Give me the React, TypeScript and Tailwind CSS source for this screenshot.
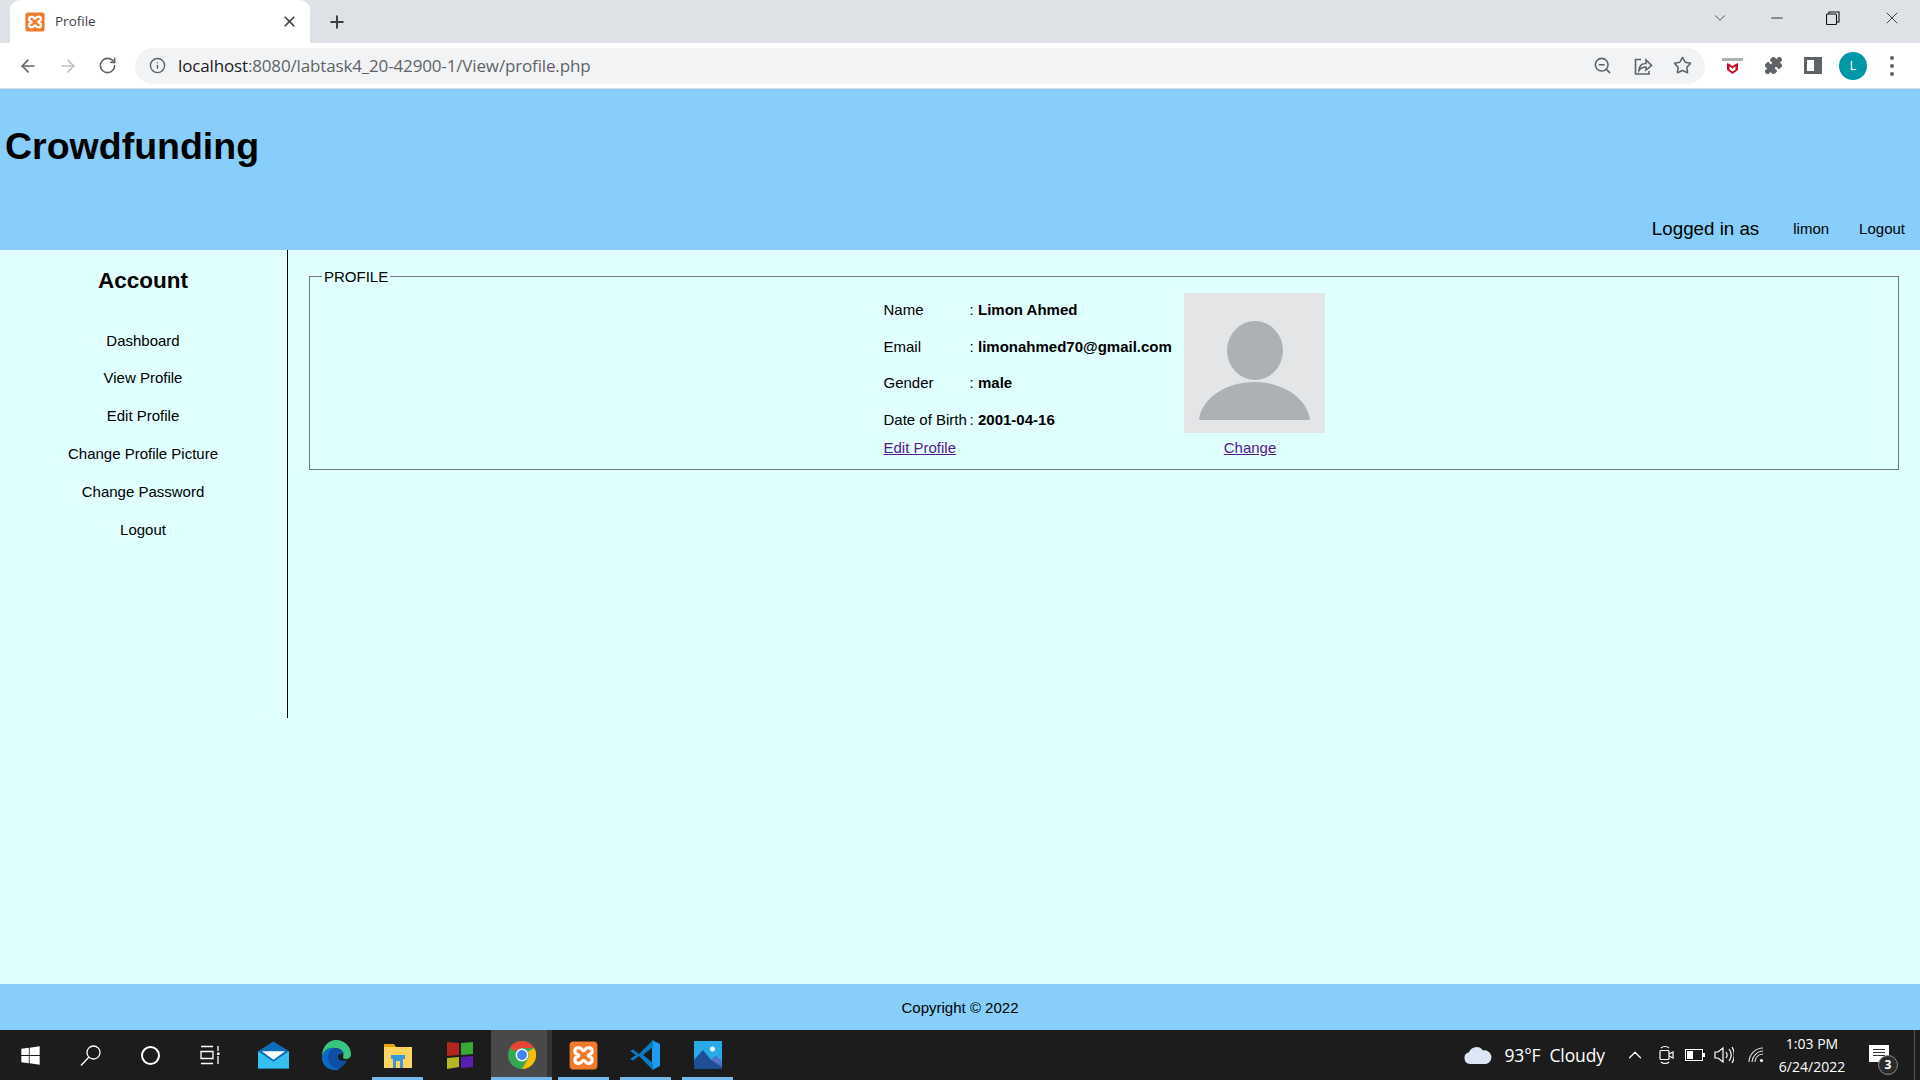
import type { ReactNode } from "react";
import { ArrowLeft, ArrowRight, RotateCw, Info, ZoomOut, Star, ChevronUp, X, Plus, Minus, ChevronDown, Puzzle } from "lucide-react";
import { FaWindows } from "react-icons/fa";

const sideLinks = ["Dashboard", "View Profile", "Edit Profile", "Change Profile Picture", "Change Password", "Logout"];
const rows = [
  ["Name", "Limon Ahmed"],
  ["Email", "limonahmed70@gmail.com"],
  ["Gender", "male"],
  ["Date of Birth", "2001-04-16"],
];

function Xampp({ size }: { size: number }) {
  return (
    <svg width={size} height={size} viewBox="0 0 24 24">
      <rect x="0.5" y="0.5" width="23" height="23" rx="3" fill="#ef7a2b" />
      <path d="M8 5.5c3 0 2.500 2.500 4 2.500s1-2.500 4-2.500c4 0 4 5 1 5.500-1.500.3-1.500 1.800 0 2 3 .5 3 5.500-1 5.500-3 0-2.500-2.500-4-2.500s-1 2.500-4 2.500c-4 0-4-5-1-5.500 1.500-.2 1.500-1.700 0-2-3-.5-3-5.500 1-5.500z" fill="none" stroke="#fff" strokeWidth="2.600" />
    </svg>
  );
}

function Share() {
  return (
    <svg width="20" height="20" viewBox="0 0 20 20" fill="none" stroke="#5f6368" strokeWidth="1.6">
      <path d="M8 3.5H2.500V18H16v-3" />
      <path d="M6 14c.5-4.500 3.500-6.500 7-6.500V4l5.500 5.500-5.500 4.500v-3c-3 0-5.500 1-7 3.500z" />
    </svg>
  );
}

function Shield() {
  return (
    <div className="flex w-[21px] flex-col items-center gap-[2px]">
      <div className="h-[3px] w-[21px] bg-[#b0b0b0]" />
      <svg width="11" height="11" viewBox="0 0 11 11">
        <path d="M0 0l2.500 1L5.500 3 8.500 1 11 0v7L5.500 11 0 7z" fill="#c8102e" />
        <path d="M2.500 3.500l3 2 3-2v3l-3 2-3-2z" fill="#fff" />
      </svg>
    </div>
  );
}

function Mail() {
  return (
    <svg width="31" height="28" viewBox="0 0 32 28">
      <path d="M0 10L16 0l16 10v18H0z" fill="#0f6cbd" />
      <path d="M4 10h24L16 19z" fill="#fff" />
      <path d="M0 10l16 11 16-11v18H0z" fill="#35c0f0" />
    </svg>
  );
}

function Edge() {
  return (
    <svg width="30" height="30" viewBox="0 0 30 30">
      <path d="M15 0C24 0 30 7 30 14c0 5-5 6-8 4 2-6-3-10-8-10C8 8 3 11 1 16 1 7 7 0 15 0z" fill="#3bc47d" />
      <path d="M1 16C3 9 9 7 14 8c-5 2-7 6-6 11 1 5 6 8 11 10-2 1-3 1-5 1C6 30 0 24 1 16z" fill="#0c69c4" />
      <path d="M14 8c4 0 8 2 9 6-3-1-6 0-6 3s4 5 9 3c-2 5-6 8-9 9-6-2-10-6-10-11s3-9 7-10z" fill="#0f4fa3" />
    </svg>
  );
}

function Folder() {
  return (
    <svg width="28" height="26" viewBox="0 0 28 26">
      <path d="M0 2h10l2 3h16v21H0z" fill="#e5a50a" />
      <rect x="0" y="5" width="28" height="21" fill="#ffd45e" />
      <path d="M9 26V15h10v11h-3v-7h-4v7z" fill="#3a96dd" />
      <rect x="7" y="13" width="14" height="4" fill="#3a96dd" />
    </svg>
  );
}

function Store() {
  return (
    <svg width="28" height="30" viewBox="0 0 28 30">
      <path d="M1 2l12 1v12L1 16z" fill="#b3261e" />
      <path d="M15 3l12-1v12l-12 1z" fill="#3aa835" />
      <path d="M1 18l12-1v10L1 29z" fill="#b5b52a" />
      <path d="M15 17l12-1v11l-12 1z" fill="#5b1fb0" />
    </svg>
  );
}

function Chrome() {
  return (
    <svg width="28" height="28" viewBox="0 0 48 48">
      <circle cx="24" cy="24" r="24" fill="#34a853" />
      <path d="M24 0a24 24 0 0 1 20.800 12H24a12 12 0 0 0-10.400 6L3.200 12A24 24 0 0 1 24 0z" fill="#ea4335" />
      <path d="M44.800 12A24 24 0 0 1 24 48l10.400-18A12 12 0 0 0 34.400 18z" fill="#fbbc04" />
      <circle cx="24" cy="24" r="11" fill="#fff" />
      <circle cx="24" cy="24" r="8.500" fill="#4285f4" />
    </svg>
  );
}

function VsCode() {
  return (
    <svg width="31" height="30" viewBox="0 0 31 30">
      <path d="M22 0l8 4v22l-8 4z" fill="#1f9cf0" />
      <path d="M23 0L9 14 3 9.500 0 11l6 4-6 4 3 1.500L9 16l14 14 0-7L13 15 23 7z" fill="#0a7cc4" />
    </svg>
  );
}

function Photos() {
  return (
    <svg width="28" height="28" viewBox="0 0 28 28">
      <rect width="28" height="28" fill="#29a9e6" />
      <circle cx="18.500" cy="8" r="2.500" fill="#e8f6ff" />
      <path d="M0 28V19L9 9l8 10 5-4 6 6v7z" fill="#1e4f96" />
      <path d="M17 19l5-4 6 6v5z" fill="#5470c8" />
    </svg>
  );
}

function Cloud() {
  return (
    <svg width="28" height="18" viewBox="0 0 28 18">
      <path d="M6 18a6 6 0 0 1-1-11.800A8 8 0 0 1 19 4.500 6.500 6.500 0 0 1 22 18z" fill="#dbe7f4" />
    </svg>
  );
}

function Avatar() {
  return (
    <div className="mt-[1px] h-[140px] w-[141px] bg-[#e3e5e7]">
      <svg width="141" height="140" viewBox="0 0 141 140">
        <ellipse cx="71" cy="57.500" rx="28" ry="29.500" fill="#adb1b4" />
        <path d="M15 127c2-21 26-38 55.500-38s53 17 55.500 38z" fill="#adb1b4" />
      </svg>
    </div>
  );
}

function TaskCell({ children, on, active }: { children: ReactNode; on?: boolean; active?: boolean }) {
  if (active) {
    return (
      <div className="relative -mx-[5px] flex h-[50px] w-[61px] items-center justify-center bg-[#494949]">
        <div className="absolute inset-y-0 right-0 w-[5px] bg-[#333]" />
        {children}
        <div className="absolute inset-x-0 bottom-0 h-[3px] bg-[#76b9ed]" />
      </div>
    );
  }
  return (
    <div className="relative flex h-[50px] w-[51px] items-center justify-center">
      {children}
      {on && <div className="absolute inset-x-0 bottom-0 h-[3px] bg-[#76b9ed]" />}
    </div>
  );
}

export default function App() {
  return (
    <div className="flex h-[1080px] w-[1920px] flex-col overflow-hidden bg-[#e0ffff] font-['Liberation_Sans',Arial,sans-serif] text-[15px] text-black">
      {/* tab strip */}
      <div className="flex h-[43px] items-end bg-[#dee1e6] pl-[10px]">
        <div className="flex h-[43px] w-[300px] items-center rounded-t-[10px] bg-white pl-[15px] pr-[12px]">
          <Xampp size={20} />
          <span className="ml-[10px] font-['Open_Sans',sans-serif] text-[13.500px] text-[#3c4043]">Profile</span>
          <X className="ml-auto text-[#3c4043]" size={17} strokeWidth={2.4} />
        </div>
        <div className="ml-[17px] flex h-[43px] items-center">
          <Plus className="text-[#3c4043]" size={20} strokeWidth={2.4} />
        </div>
        <div className="ml-auto flex h-[36px] items-center self-start pr-[18px] text-[#222]">
          <ChevronDown size={18} strokeWidth={1} className="mr-[39px]" />
          <Minus size={18} strokeWidth={1.2} className="mr-[40px]" />
          <svg width="14" height="14" viewBox="0 0 14 14" fill="none" stroke="#111" strokeWidth="1.100" className="mr-[42px]">
            <rect x="0.500" y="3" width="10" height="10.500" rx="1" />
            <path d="M3 3V1h10v10h-2.500" />
          </svg>
          <X size={20} strokeWidth={1} />
        </div>
      </div>

      {/* toolbar */}
      <div className="flex h-[46px] items-center border-b border-[#dadce0] bg-white">
        <ArrowLeft className="ml-[18px] text-[#5f6368]" size={20} strokeWidth={2} />
        <ArrowRight className="ml-[20px] text-[#bdc1c6]" size={20} strokeWidth={2} />
        <RotateCw className="ml-[20px] text-[#5f6368]" size={19} strokeWidth={2} />
        <div className="ml-[18px] flex h-[36px] w-[1570px] items-center rounded-full bg-[#f1f3f4] pl-[14px] pr-[13px]">
          <Info className="text-[#5f6368]" size={17} strokeWidth={2} />
          <span className="ml-[12px] font-['Open_Sans',sans-serif] text-[17px] tracking-[-0.15px] text-[#5f6368]">
            <span className="text-[#202124]">localhost</span>:8080/labtask4_20-42900-1/View/profile.php
          </span>
          <ZoomOut className="ml-auto text-[#5f6368]" size={19} strokeWidth={2} />
          <div className="ml-[21px]"><Share /></div>
          <Star className="ml-[20px] text-[#5f6368]" size={19} strokeWidth={2} />
        </div>
        <div className="ml-[17px]"><Shield /></div>
        <Puzzle className="ml-[21px] fill-[#5f6368] text-[#5f6368]" size={19} strokeWidth={1.5} />
        <div className="ml-[21px] h-[17px] w-[18px] border-[3px] border-[#5f6368] bg-[linear-gradient(to_right,#fff_60%,#5f6368_60%)]" />
        <div className="ml-[17px] flex h-[28px] w-[28px] items-center justify-center rounded-full bg-[#0097a7] font-['Open_Sans',sans-serif] text-[13px] text-white">L</div>
        <div className="ml-[23px] flex flex-col gap-[4px]">
          <span className="h-[4px] w-[4px] rounded-full bg-[#5f6368]" />
          <span className="h-[4px] w-[4px] rounded-full bg-[#5f6368]" />
          <span className="h-[4px] w-[4px] rounded-full bg-[#5f6368]" />
        </div>
      </div>

      {/* page */}
      <div className="relative flex min-h-0 flex-1 flex-col">
        <header className="flex h-[161px] flex-col bg-[#87cefa]">
          <h1 className="pl-[5px] pt-[37px] text-[37.500px] font-bold leading-[41px]">Crowdfunding</h1>
          <div className="mt-auto flex items-center justify-end pb-[10px] pr-[15px]">
            <span className="text-[18.750px] leading-[22px]">Logged in as</span>
            <span className="ml-[34px]">limon</span>
            <span className="ml-[30px]">Logout</span>
          </div>
        </header>

        <main className="flex flex-1 items-start">
          <aside className="h-[468px] w-[288px] border-r border-black pr-[1px]">
            <h2 className="pt-[18px] text-center text-[22.500px] font-bold leading-[26px]">Account</h2>
            <ul className="mt-[28px] text-center">
              {sideLinks.map((l) => (
                <li key={l} className="flex h-[37.800px] items-center justify-center">{l}</li>
              ))}
            </ul>
          </aside>
          <div className="flex-1 pl-[21px] pr-[21px] pt-[18px]">
            <fieldset className="border border-[#767676] px-[12px] pb-[9px]">
              <legend className="px-[2px] leading-[17px]">PROFILE</legend>
              <div className="mx-auto flex w-[445px] pl-[2px] pt-[7px]">
                <div className="w-[300px]">
                  {rows.map(([k, v]) => (
                    <div key={k} className="flex h-[36.600px] items-center">
                      <span className="w-[86px] whitespace-nowrap">{k}</span>
                      <span className="w-[8.500px]">:</span>
                      <span className="whitespace-nowrap font-bold">{v}</span>
                    </div>
                  ))}
                  <a className="-mt-[1.500px] block text-[#551a8b] underline">Edit Profile</a>
                </div>
                <div className="flex flex-col">
                  <Avatar />
                  <a className="mt-[4px] pr-[8px] text-center text-[#551a8b] underline">Change</a>
                </div>
              </div>
            </fieldset>
          </div>
        </main>

        <footer className="flex h-[46px] items-center justify-center bg-[#87cefa] pt-[2px]">Copyright © 2022</footer>
      </div>

      {/* taskbar */}
      <div className="flex h-[50px] items-center bg-[#1c1c1c] text-white">
        <div className="flex w-[60px] justify-center"><FaWindows size={21} /></div>
        <div className="flex w-[60px] justify-center">
          <svg width="21" height="21" viewBox="0 0 21 21" fill="none" stroke="#fff" strokeWidth="1.300">
            <circle cx="13.500" cy="7.500" r="6.500" />
            <path d="M8.800 12.200L1 20.500" />
          </svg>
        </div>
        <div className="flex w-[60px] justify-center">
          <div className="h-[19px] w-[19px] rounded-full border-[2.500px] border-white" />
        </div>
        <div className="flex w-[60px] justify-center">
          <svg width="20" height="20" viewBox="0 0 20 20" fill="none" stroke="#fff" strokeWidth="1.300">
            <path d="M1 1.500h12M1 6.500h12v7H1zM1 18.500h12M18 1v5M18 11v8" />
            <rect x="17" y="7.500" width="2.500" height="2.500" fill="#fff" stroke="none" />
          </svg>
        </div>
        <div className="ml-[8px] flex gap-[11px]">
          <TaskCell><Mail /></TaskCell>
          <TaskCell><Edge /></TaskCell>
          <TaskCell on><Folder /></TaskCell>
          <TaskCell><Store /></TaskCell>
          <TaskCell on active><Chrome /></TaskCell>
          <TaskCell on><Xampp size={29} /></TaskCell>
          <TaskCell on><VsCode /></TaskCell>
          <TaskCell on><Photos /></TaskCell>
        </div>
        <div className="ml-auto flex h-full items-center font-['Open_Sans',sans-serif]">
          <Cloud />
          <span className="ml-[12px] whitespace-pre text-[17.500px] tracking-[-0.1px]">93°F  Cloudy</span>
          <ChevronUp size={22} strokeWidth={1.3} className="ml-[19px]" />
          <svg width="15" height="20" viewBox="0 0 15 20" fill="none" stroke="#fff" strokeWidth="1.200" className="ml-[13px]">
            <rect x="1" y="5.500" width="9" height="9" rx="1" />
            <path d="M10 9l4-2v6l-4-2M2 3c2-2 6-2 8 0M2 17c2 2 6 2 8 0" />
          </svg>
          <svg width="20" height="12" viewBox="0 0 20 12" className="ml-[11px]">
            <rect x="0.500" y="0.500" width="17" height="11" fill="none" stroke="#fff" />
            <rect x="2" y="2" width="6" height="8" fill="#fff" />
            <rect x="18" y="4" width="2" height="4" fill="#fff" />
          </svg>
          <svg width="20" height="18" viewBox="0 0 20 18" fill="none" stroke="#fff" strokeWidth="1.200" className="ml-[9px]">
            <path d="M1 6h3l5-4v14l-5-4H1zM12 6c1.500 2 1.500 4 0 6M15 3c3 4 3 8 0 12M18 1c3 5 3 11 0 16" />
          </svg>
          <svg width="16" height="16" viewBox="0 0 16 16" fill="none" stroke="#ddd" strokeWidth="1.100" className="ml-[14px]">
            <path d="M1 15C1 8 7 1 15 1M4 15c0-5 5-11 11-11M7 15c0-4 3-8 8-8" />
            <circle cx="13.500" cy="13.500" r="1.600" fill="#fff" stroke="none" />
          </svg>
          <div className="ml-[14px] mt-[1px] flex w-[68px] flex-col items-center text-[14px] leading-[22.500px]">
            <span>1:03 PM</span>
            <span>6/24/2022</span>
          </div>
          <div className="relative ml-[23px] mt-[15px] h-[17px] w-[20px] self-start bg-white">
            <div className="mx-[4px] mt-[4px] h-[1px] bg-[#333]" />
            <div className="mx-[4px] mt-[2px] h-[1px] bg-[#333]" />
            <div className="mx-[4px] mt-[2px] h-[1px] bg-[#333]" />
            <div className="absolute -bottom-[13px] -right-[9px] flex h-[20px] w-[20px] items-center justify-center rounded-full border border-[#888] bg-[#2b2b2b] text-[12px] font-bold">3</div>
          </div>
          <div className="ml-[25px] h-full w-px bg-[#555]" />
          <div className="w-[5px]" />
        </div>
      </div>
    </div>
  );
}
